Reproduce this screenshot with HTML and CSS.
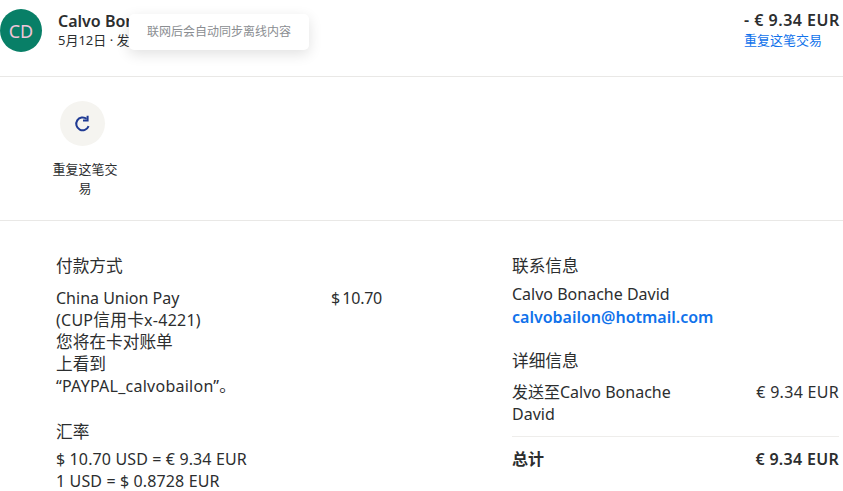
FILE: index.html
```html
<!DOCTYPE html>
<html lang="zh">
<head>
  <meta charset="UTF-8">
  <title>交易详情</title>
  <link rel="stylesheet" href="styles.css">
</head>
<body>

<div class="toast">联网后会自动同步离线内容</div>

<header class="summary">
  <div class="avatar">CD</div>
  <div class="who">
    <div class="name">Calvo Bonache David</div>
    <div class="meta">5月12日 · 发送的付款</div>
  </div>
  <div class="total">
    <div class="amount">- € 9.34 EUR</div>
    <a class="repeat-link" href="#">重复这笔交易</a>
  </div>
</header>

<section class="actions">
  <div class="action">
    <div class="action-icon">
      <svg width="18" height="18" viewBox="0 0 18 18" fill="none" stroke="#1f3a93" stroke-width="2">
        <path d="M14.6 11.2A6.4 6.4 0 1 1 12.6 3.8"/>
        <path d="M13.6 0.8V5.4H9"/>
      </svg>
    </div>
    <div class="action-label">重复这笔交易</div>
  </div>
</section>

<main class="details">
  <div class="col-left">
    <h2>付款方式</h2>
    <div class="pay-row">
      <div class="pay-text">China Union Pay<br><span class="wide">(CUP<span class="zh">信用卡</span>x-4221)</span><br><span class="zh">您将在卡对账单</span><br><span class="zh">上看到</span><br><span class="wide">“PAYPAL_calvobailon”</span><span class="zh">。</span></div>
      <div class="pay-amount">$ 10.70</div>
    </div>
    <h2 class="rate-title">汇率</h2>
    <div class="rate">$ 10.70 USD = € 9.34 EUR<br>1 USD = $ 0.8728 EUR</div>
  </div>
  <div class="col-right">
    <h2>联系信息</h2>
    <div class="contact">Calvo Bonache David<br><a class="email" href="#">calvobailon@hotmail.com</a></div>
    <h2 class="info-title">详细信息</h2>
    <div class="line">
      <div class="line-name">发送至Calvo Bonache David</div>
      <div class="line-price">€ 9.34 EUR</div>
    </div>
    <div class="line line-total">
      <div>总计</div>
      <div class="line-price">€ 9.34 EUR</div>
    </div>
  </div>
</main>

</body>
</html>
```

FILE: styles.css
```css
body {
  margin: 0;
  height: 491px;
  overflow: hidden;
  position: relative;
  font-family: "Noto Sans", "Noto Sans CJK SC", sans-serif;
  font-size: 16px;
  line-height: 22px;
  color: #2c2e2f;
  background-color: white;
}

.toast {
  position: absolute;
  left: 129px;
  top: 14px;
  width: 180px;
  height: 36px;
  box-sizing: border-box;
  padding-left: 18px;
  font-size: 12px;
  line-height: 36px;
  color: #8a8d91;
  background-color: white;
  border-radius: 5px;
  box-shadow: 0 4px 14px rgba(0,0,0,0.12);
}

.summary {
  display: flex;
  align-items: flex-start;
  height: 77px;
  box-sizing: border-box;
  padding: 9px 3px 0 0;
  border-bottom: 1px solid #e9e8e6;
}

.avatar {
  width: 42px;
  height: 43px;
  border-radius: 50%;
  background-color: #087f67;
  color: #f0c4d8;
  font-size: 18px;
  line-height: 44px;
  text-align: center;
}

.who {
  margin-left: 16px;
  flex: 1;
}

.name {
  font-weight: 600;
  line-height: 24px;
}

.meta {
  font-size: 13px;
  line-height: 14px;
}

.total {
  width: 96px;
}

.amount {
  font-weight: 600;
  font-size: 16px;
  letter-spacing: 0.5px;
  line-height: 23px;
  white-space: nowrap;
}

.repeat-link {
  display: block;
  font-size: 13px;
  line-height: 16px;
  color: #1072eb;
  text-decoration: none;
}

.actions {
  height: 144px;
  box-sizing: border-box;
  padding: 24px 0 0 50px;
  border-bottom: 1px solid #e9e8e6;
}

.action {
  width: 70px;
  text-align: center;
}

.action-icon {
  display: flex;
  align-items: center;
  justify-content: center;
  width: 45px;
  height: 45px;
  margin: 0 0 14px 10px;
  border-radius: 50%;
  background-color: #f5f4f0;
}

.action-label {
  font-size: 13px;
  line-height: 19px;
}

.details {
  display: flex;
  padding: 33px 4px 0 56px;
}

.col-left {
  width: 326px;
  margin-right: 130px;
}

.col-right {
  flex: 1;
}

h2 {
  margin: 0;
  font-size: 16.7px;
  font-weight: 400;
  line-height: 24px;
}

.zh {
  font-size: 16.7px;
}

.wide {
  letter-spacing: 0.25px;
}

.pay-row {
  display: flex;
  justify-content: space-between;
  margin-top: 9px;
}

.pay-text {
  width: 200px;
}

.pay-amount {
  word-spacing: -1.5px;
  letter-spacing: -0.25px;
}

.rate-title {
  margin-top: 23px;
}

.rate {
  margin-top: 4px;
  letter-spacing: 0.13px;
}

.contact {
  margin-top: 5px;
  line-height: 23px;
}

.email {
  font-weight: 600;
  color: #1072eb;
  text-decoration: none;
}

.info-title {
  margin-top: 20px;
}

.line {
  display: flex;
  justify-content: space-between;
  margin-top: 8px;
}

.line-name {
  width: 170px;
}

.line-price {
  letter-spacing: 0.3px;
}

.line-total {
  margin-top: 11px;
  padding-top: 11px;
  border-top: 1px solid #eeedeb;
  font-weight: 600;
}
```
